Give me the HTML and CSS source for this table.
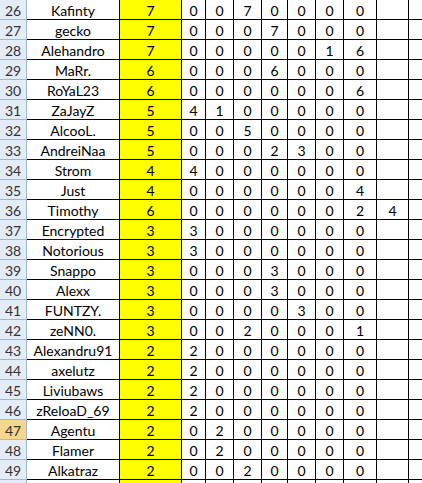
FILE: index.html
```html
<!DOCTYPE html>
<html>
<head>
<meta charset="utf-8">
<link rel="stylesheet" href="styles.css">
</head>
<body>
<table class="sheet">
<colgroup>
<col class="c-hdr"><col class="c-name"><col class="c-total">
<col class="c-d"><col class="c-e"><col class="c-f"><col class="c-g"><col class="c-h"><col class="c-i"><col class="c-j"><col class="c-k"><col class="c-l">
</colgroup>
<tbody>
<tr><th>26</th><td>Kafinty</td><td class="y">7</td><td>0</td><td>0</td><td>7</td><td>0</td><td>0</td><td>0</td><td>0</td><td></td><td class="last"></td></tr>
<tr><th>27</th><td>gecko</td><td class="y">7</td><td>0</td><td>0</td><td>0</td><td>7</td><td>0</td><td>0</td><td>0</td><td></td><td class="last"></td></tr>
<tr><th>28</th><td>Alehandro</td><td class="y">7</td><td>0</td><td>0</td><td>0</td><td>0</td><td>0</td><td>1</td><td>6</td><td></td><td class="last"></td></tr>
<tr><th>29</th><td>MaRr.</td><td class="y">6</td><td>0</td><td>0</td><td>0</td><td>6</td><td>0</td><td>0</td><td>0</td><td></td><td class="last"></td></tr>
<tr><th>30</th><td>RoYaL23</td><td class="y">6</td><td>0</td><td>0</td><td>0</td><td>0</td><td>0</td><td>0</td><td>6</td><td></td><td class="last"></td></tr>
<tr><th>31</th><td>ZaJayZ</td><td class="y">5</td><td>4</td><td>1</td><td>0</td><td>0</td><td>0</td><td>0</td><td>0</td><td></td><td class="last"></td></tr>
<tr><th>32</th><td>AlcooL.</td><td class="y">5</td><td>0</td><td>0</td><td>5</td><td>0</td><td>0</td><td>0</td><td>0</td><td></td><td class="last"></td></tr>
<tr><th>33</th><td>AndreiNaa</td><td class="y">5</td><td>0</td><td>0</td><td>0</td><td>2</td><td>3</td><td>0</td><td>0</td><td></td><td class="last"></td></tr>
<tr><th>34</th><td>Strom</td><td class="y">4</td><td>4</td><td>0</td><td>0</td><td>0</td><td>0</td><td>0</td><td>0</td><td></td><td class="last"></td></tr>
<tr><th>35</th><td>Just</td><td class="y">4</td><td>0</td><td>0</td><td>0</td><td>0</td><td>0</td><td>0</td><td>4</td><td></td><td class="last"></td></tr>
<tr><th>36</th><td>Timothy</td><td class="y">6</td><td>0</td><td>0</td><td>0</td><td>0</td><td>0</td><td>0</td><td>2</td><td>4</td><td class="last"></td></tr>
<tr><th>37</th><td>Encrypted</td><td class="y">3</td><td>3</td><td>0</td><td>0</td><td>0</td><td>0</td><td>0</td><td>0</td><td></td><td class="last"></td></tr>
<tr><th>38</th><td>Notorious</td><td class="y">3</td><td>3</td><td>0</td><td>0</td><td>0</td><td>0</td><td>0</td><td>0</td><td></td><td class="last"></td></tr>
<tr><th>39</th><td>Snappo</td><td class="y">3</td><td>0</td><td>0</td><td>0</td><td>3</td><td>0</td><td>0</td><td>0</td><td></td><td class="last"></td></tr>
<tr><th>40</th><td>Alexx</td><td class="y">3</td><td>0</td><td>0</td><td>0</td><td>3</td><td>0</td><td>0</td><td>0</td><td></td><td class="last"></td></tr>
<tr><th>41</th><td>FUNTZY.</td><td class="y">3</td><td>0</td><td>0</td><td>0</td><td>0</td><td>3</td><td>0</td><td>0</td><td></td><td class="last"></td></tr>
<tr><th>42</th><td>zeNN0.</td><td class="y">3</td><td>0</td><td>0</td><td>2</td><td>0</td><td>0</td><td>0</td><td>1</td><td></td><td class="last"></td></tr>
<tr><th>43</th><td>Alexandru91</td><td class="y">2</td><td>2</td><td>0</td><td>0</td><td>0</td><td>0</td><td>0</td><td>0</td><td></td><td class="last"></td></tr>
<tr><th>44</th><td>axelutz</td><td class="y">2</td><td>2</td><td>0</td><td>0</td><td>0</td><td>0</td><td>0</td><td>0</td><td></td><td class="last"></td></tr>
<tr><th>45</th><td>Liviubaws</td><td class="y">2</td><td>2</td><td>0</td><td>0</td><td>0</td><td>0</td><td>0</td><td>0</td><td></td><td class="last"></td></tr>
<tr><th>46</th><td>zReloaD_69</td><td class="y">2</td><td>2</td><td>0</td><td>0</td><td>0</td><td>0</td><td>0</td><td>0</td><td></td><td class="last"></td></tr>
<tr><th class="sel">47</th><td>Agentu</td><td class="y">2</td><td>0</td><td>2</td><td>0</td><td>0</td><td>0</td><td>0</td><td>0</td><td></td><td class="last"></td></tr>
<tr><th>48</th><td>Flamer</td><td class="y">2</td><td>0</td><td>2</td><td>0</td><td>0</td><td>0</td><td>0</td><td>0</td><td></td><td class="last"></td></tr>
<tr><th>49</th><td>Alkatraz</td><td class="y">2</td><td>0</td><td>0</td><td>2</td><td>0</td><td>0</td><td>0</td><td>0</td><td></td><td class="last"></td></tr>
<tr><th></th><td></td><td class="y"></td><td></td><td></td><td></td><td></td><td></td><td></td><td></td><td></td><td class="last"></td></tr>
</tbody>
</table>
</body>
</html>
```
FILE: styles.css
```css
html, body {
  margin: 0;
  padding: 0;
  background: #ffffff;
  overflow: hidden;
  width: 422px;
  height: 483px;
}
.sheet {
  border-collapse: separate;
  border-spacing: 0;
  table-layout: fixed;
  width: 422px;
  font-family: Lato, "Liberation Sans", sans-serif;
  font-size: 14px;
  color: #000;
}
.c-hdr { width: 27px; }
.c-name { width: 93px; }
.c-total { width: 62px; }
.c-d { width: 24px; }
.c-e { width: 28px; }
.c-f { width: 28px; }
.c-g { width: 26px; }
.c-h { width: 28px; }
.c-i { width: 28px; }
.c-j { width: 33px; }
.c-k { width: 32px; }
.c-l { width: 13px; }
.sheet th, .sheet td {
  padding: 2px 0 0 0;
  height: 17px;
  line-height: 17px;
  text-align: center;
  white-space: nowrap;
  overflow: hidden;
  font-weight: normal;
  border-right: 1px solid #000;
  border-bottom: 1px solid #000;
}
.sheet td.last {
  border-right: none;
}
.sheet th {
  background: #e4ecf7;
  color: #333;
  border-right: 1px solid #9eb6ce;
  border-bottom: 1px solid #9eb6ce;
}
.sheet th.sel {
  background: #f8d68d;
  border-bottom-color: #e6b55a;
}
.sheet td.y {
  background: #ffff00;
}
```
